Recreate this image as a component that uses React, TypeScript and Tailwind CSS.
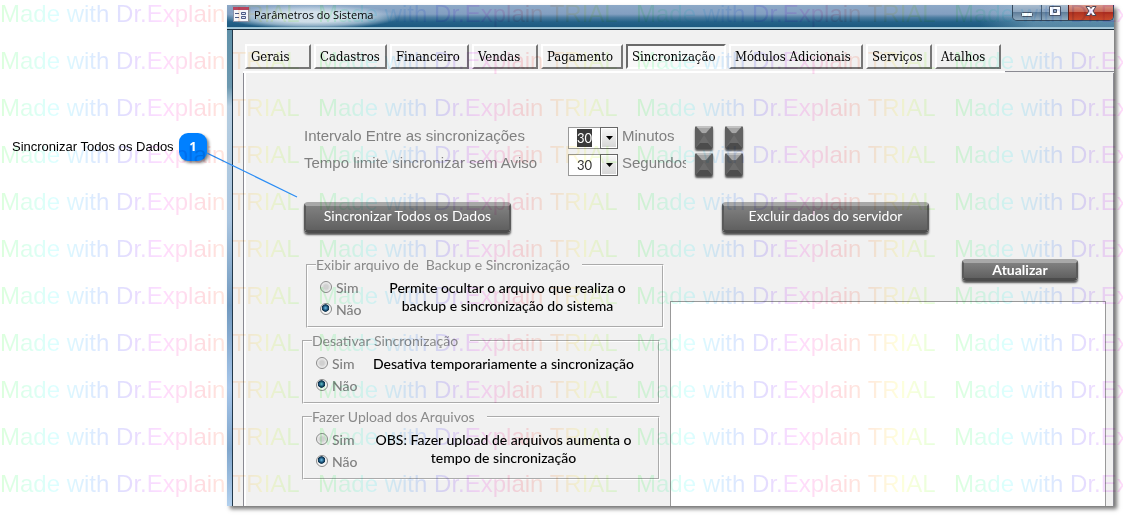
import { ReactNode, useState } from "react";
import { twJoin, twMerge } from "tailwind-merge";

interface ITab {
  label: string;
  width: string;
}

interface IOptionGroup {
  name: string;
  legend: string;
  description: string;
  className?: string;
}

const TABS: ITab[] = [
  { label: "Gerais", width: "w-[66px]" },
  { label: "Cadastros", width: "w-[73px]" },
  { label: "Financeiro", width: "w-[79px]" },
  { label: "Vendas", width: "w-[66px]" },
  { label: "Pagamento", width: "w-[82px]" },
  { label: "Sincronização", width: "w-[100px]" },
  { label: "Módulos Adicionais", width: "w-[134px]" },
  { label: "Serviços", width: "w-[66px]" },
  { label: "Atalhos", width: "w-[66px]" },
];

const GROUPS: IOptionGroup[] = [
  {
    name: "backup",
    legend: "Exibir arquivo de  Backup e Sincronização",
    description: "Permite ocultar o arquivo que realiza o\nbackup e sincronização do sistema",
    className: "ml-1 -mr-1",
  },
  {
    name: "desativar",
    legend: "Desativar Sincronização",
    description: "Desativa temporariamente a sincronização",
  },
  {
    name: "upload",
    legend: "Fazer Upload dos Arquivos",
    description: "OBS: Fazer upload de arquivos aumenta o\ntempo de sincronização",
  },
];

function App() {
  const [activeTab, setActiveTab] = useState<string>("Sincronização");

  return (
    <div className="relative flex min-h-screen overflow-hidden bg-white pt-[5px] pr-[9px] pb-[9px] font-['Liberation_Sans',sans-serif]">
      <Callout />

      <main className="flex min-w-0 flex-1 flex-col shadow-[3px_3px_4px_#777]">
        <TitleBar />
        <div className="flex flex-1 bg-[#f1f1f1]">
          <div className="w-[5px] bg-[linear-gradient(#5f90a8,#6d99b0_12%,#b5cde0_16%,#a9c5e0_40%,#7199bf_58%,#a6c6ea_75%,#80a6cc_88%,#b2d0ee)]" />
          <div className="flex min-w-0 flex-1 flex-col border-l border-[#23394b] pt-[14px] pl-[10px]">
            <TabBar activeTab={activeTab} onSelect={setActiveTab} />
            <SyncPanel />
          </div>
        </div>
      </main>

      <Watermark />
    </div>
  );
}

export default App;

const Callout = () => (
  <aside className="relative w-[227px] shrink-0 pt-[127px] pl-3">
    <div className="flex items-center gap-[6px]">
      <p className="w-[161px] pt-px text-[13px] leading-7 whitespace-nowrap text-black">
        Sincronizar Todos os Dados
      </p>
      <span className="flex h-7 w-7 items-center justify-center rounded-[9px] bg-[#0080ff] font-['Open_Sans',sans-serif] text-[13px] font-bold text-white shadow-[2px_2px_3px_#888]">
        1
      </span>
    </div>
    <svg
      className="pointer-events-none absolute top-[147px] left-[207px] z-10 h-[47px] w-[92px]"
      viewBox="0 0 92 47"
    >
      <path d="M0 1 L90 45" stroke="#2b8df5" strokeWidth="1.2" fill="none" />
    </svg>
  </aside>
);

const TitleBar = () => (
  <header className="flex h-[25px] shrink-0 justify-between border-b border-[#182c3a] bg-[linear-gradient(#8da9c7,#839fc1_38%,#4e7ea2_52%,#256289_70%,#1d5a80_91%,#a9cddd_94%)]">
    <div className="flex items-center gap-[5px] bg-[radial-gradient(ellipse_at_center,#dbe6efee_30%,#c4d6e5aa_52%,transparent_72%)] pr-6 pb-[5px] pl-[6px]">
      <FormIcon />
      <h1 className="font-['Open_Sans',sans-serif] text-[11px] leading-4 whitespace-nowrap text-black">
        Parâmetros do Sistema
      </h1>
    </div>
    <div className="flex bg-[linear-gradient(90deg,transparent,#a9c8d866_40%)] pl-8">
      <div className="flex h-4 overflow-hidden rounded-b-[5px] border border-t-0 border-[#34485c]">
        <ControlButton label="Minimizar" className="w-7">
          <rect x="8.5" y="7.5" width="11" height="4" rx="1" fill="#fff" stroke="#4a5568" />
        </ControlButton>
        <ControlButton label="Maximizar" className="w-[27px] border-l border-[#4b6075]">
          <path d="M8.5 1.500h11v9h-11z M12.500 4.500h3v3h-3z" fill="#fff" fillRule="evenodd" stroke="#4a5568" />
        </ControlButton>
        <ControlButton
          label="Fechar"
          className="w-[45px] border-l border-[#5a1f1c] bg-[linear-gradient(#d79a8f,#c86a58_45%,#b03220_50%,#c84a2c)]"
        >
          <path
            d="M9 1.500h3.500L14 3.500l1.500-2H19L16 6l3 4.500h-3.500L14 8.500l-1.500 2H9L12 6z"
            fill="#fff"
            stroke="#4f4656"
          />
        </ControlButton>
      </div>
    </div>
  </header>
);

const ControlButton = ({
  label,
  className,
  children,
}: {
  label: string;
  className: string;
  children: ReactNode;
}) => (
  <button
    type="button"
    aria-label={label}
    className={twMerge(
      "flex items-start justify-center bg-[linear-gradient(#a9bccf,#8ea6bf_45%,#617f9b_50%,#8faabf)]",
      className
    )}
  >
    <svg className="h-[14px] w-7 shrink-0" viewBox="0 0 28 14">
      {children}
    </svg>
  </button>
);

const FormIcon = () => (
  <svg className="h-[15px] w-4 shrink-0" viewBox="0 0 16 15">
    <rect x="0.500" y="0.500" width="15" height="14" fill="#f4f6fb" stroke="#8c93a8" />
    <rect x="0" y="0" width="16" height="3" fill="#b8445e" />
    <path d="M2 6.500h4M2 10.500h4" stroke="#4c5a86" />
    <path d="M8.500 5.500h4v2h-4zM8.500 9.500h4v2h-4z" fill="#dfe5f4" stroke="#4c5a86" />
  </svg>
);

const TabBar = ({
  activeTab,
  onSelect,
}: {
  activeTab: string;
  onSelect: (label: string) => void;
}) => (
  <nav className="flex gap-[3px] pl-[2px]">
    {TABS.map((tab) => {
      const isActive = tab.label === activeTab;
      return (
        <button
          key={tab.label}
          type="button"
          onClick={() => onSelect(tab.label)}
          className={twJoin(
            "h-[25px] border-2 px-1 text-left whitespace-nowrap text-black",
            "font-['DejaVu_Serif_Condensed','DejaVu_Serif',serif] text-[13px] leading-5",
            tab.width,
            isActive
              ? "border-t-[#6a6a6a] border-r-white border-b-white border-l-[#6a6a6a] bg-[#f9f9f9] pt-px"
              : "border-t-white border-r-[#777] border-b-[#777] border-l-white bg-[#f1f1f1]"
          )}
        >
          {tab.label}
        </button>
      );
    })}
  </nav>
);

const SyncPanel = () => (
  <section className="mt-[2px] flex flex-1 flex-col">
    <div className="flex">
      <div className="h-[2px] w-[762px] bg-white" />
      <div className="h-px flex-1 bg-[#8a8a92]" />
    </div>
    <div className="flex flex-1 flex-col border-x border-[#8a8a92] pt-[53px] pl-[58px] shadow-[inset_2px_0_0_#fff]">
      <div className="flex flex-col gap-1 pl-[2px]">
        <IntervalRow
          id="intervalo"
          label="Intervalo Entre as sincronizações"
          unit="Minutos"
          isSelected
        />
        <IntervalRow
          id="limite"
          label="Tempo limite sincronizar sem Aviso"
          unit="Segundos"
        />
      </div>

      <div className="mt-[26px] flex gap-[211px] pl-[2px]">
        <GlossButton className="h-[31px] w-[207px] pb-1">
          Sincronizar Todos os Dados
        </GlossButton>
        <GlossButton className="h-[31px] w-[207px] pb-1">
          Excluir dados do servidor
        </GlossButton>
      </div>

      <div className="flex flex-1">
        <div className="flex w-[358px] shrink-0 flex-col gap-1 pt-[23px]">
          {GROUPS.map((group) => (
            <OptionGroup key={group.name} {...group} />
          ))}
        </div>
        <div className="ml-[10px] flex min-w-0 flex-1 flex-col pt-[26px] pr-[7px]">
          <GlossButton className="mr-7 h-[22px] w-[116px] self-end pb-[2px] font-bold">
            Atualizar
          </GlossButton>
          <textarea
            aria-label="Arquivos"
            readOnly
            className="mt-5 w-full flex-1 resize-none border border-b-0 border-[#999] bg-white"
          />
        </div>
      </div>
    </div>
  </section>
);

const IntervalRow = ({
  id,
  label,
  unit,
  isSelected = false,
}: {
  id: string;
  label: string;
  unit: string;
  isSelected?: boolean;
}) => (
  <div className="flex h-[23px] items-center text-[15px] leading-5 text-[#808080]">
    <label htmlFor={id} className="w-[264px] pb-1 whitespace-nowrap">
      {label}
    </label>
    <div className="relative h-[22px] w-[50px]">
      <select
        id={id}
        className={twJoin(
          "h-full w-full appearance-none border border-[#999] bg-white pl-2 font-['Lato',sans-serif] text-[13px]",
          isSelected
            ? "bg-[linear-gradient(#3a3a3a,#3a3a3a)] bg-[length:15px_18px] bg-[position:8px_1px] bg-no-repeat text-white"
            : "text-[#333]"
        )}
      >
        <option>30</option>
      </select>
      <span className="pointer-events-none absolute inset-y-0 right-0 flex w-[18px] items-center justify-center border border-[#666] bg-[linear-gradient(#f8f8f8,#d5d5d5)] shadow-[inset_0_0_0_1px_#fff]">
        <svg className="h-1 w-[7px]" viewBox="0 0 7 4">
          <path d="M0 0h7L3.500 4z" fill="#000" />
        </svg>
      </span>
    </div>
    <span className="ml-1 w-16 overflow-hidden pb-1 whitespace-nowrap">{unit}</span>
    <div className="ml-[9px] flex gap-3">
      <KeyButton label={`Aumentar ${unit}`} />
      <KeyButton label={`Diminuir ${unit}`} />
    </div>
  </div>
);

const KeyButton = ({ label }: { label: string }) => (
  <button
    type="button"
    aria-label={label}
    className="h-[23px] w-[18px] overflow-hidden rounded-[2px] shadow-[0_2px_2px_#555]"
  >
    <svg className="h-full w-full" viewBox="0 0 18 23">
      <rect width="18" height="23" fill="#6c6c6c" />
      <path d="M0 0L9 9L0 23z" fill="#5f5f5f" />
      <path d="M18 0L9 9L18 23z" fill="#626262" />
      <path d="M0 23L5 17h8L18 23z" fill="#4c4c4c" />
      <path d="M1 0h16L11 7H7z" fill="#a6a6a6" />
      <path d="M1 0h16L15 2H3z" fill="#c2c2c2" />
    </svg>
  </button>
);

const GlossButton = ({
  className,
  children,
}: {
  className?: string;
  children: ReactNode;
}) => (
  <button
    type="button"
    className={twMerge(
      "flex items-center justify-center rounded-[4px] border-x-2 border-t-4 border-b-[3px] border-x-[#5a5a5a] border-t-[#a8a8a8] border-b-[#4c4c4c]",
      "bg-[linear-gradient(#808080,#606060)] font-['Lato',sans-serif] text-[14px] leading-4 text-white shadow-[0_2px_2px_#555]",
      className
    )}
  >
    {children}
  </button>
);

const OptionGroup = ({ name, legend, description, className }: IOptionGroup) => (
  <fieldset
    className={twJoin(
      "h-[72px] border-2 border-white px-2 font-['Lato',sans-serif] [border-style:groove]",
      className
    )}
  >
    <legend className="pr-3 text-[14px] leading-[18px] whitespace-pre text-[#8a8a8a]">
      {legend}
    </legend>
    <div className="flex pl-1">
      <div className="flex w-[41px] shrink-0 flex-col gap-1 pt-1">
        <RadioOption name={name} label="Sim" />
        <RadioOption name={name} label="Não" defaultChecked />
      </div>
      <p className="flex-1 pt-[5px] text-center text-[14px] leading-[18px] font-medium whitespace-pre text-black">
        {description}
      </p>
    </div>
  </fieldset>
);

const RadioOption = ({
  name,
  label,
  defaultChecked,
}: {
  name: string;
  label: string;
  defaultChecked?: boolean;
}) => (
  <label className="flex h-[18px] items-center gap-1 text-[14px] font-medium text-[#808080]">
    <input
      type="radio"
      name={name}
      defaultChecked={defaultChecked}
      className={twJoin(
        "h-3 w-3 shrink-0 appearance-none rounded-full border border-[#8a8a8a]",
        "bg-[radial-gradient(circle,#d0d0d0_30%,#f4f4f4_75%)]",
        "checked:bg-[radial-gradient(circle_at_45%_40%,#6fc0e8,#14486e_32%,#0d3048_42%,#f4f4f4_50%)]"
      )}
    />
    {label}
  </label>
);

const Watermark = () => (
  <div
    aria-hidden="true"
    className="pointer-events-none absolute inset-0 z-20 overflow-hidden mix-blend-multiply"
  >
    <div className="-mt-[10px] text-[24px] leading-[47px]">
      {Array.from({ length: 11 }, (_, row) => (
        <div key={row} className="flex h-[47px] whitespace-nowrap">
          {Array.from({ length: 4 }, (_, col) => (
            <div key={col} className="w-[318px] shrink-0">
              <span className="bg-[linear-gradient(90deg,#dcffdc,#dcffff_18%,#dce4ff_36%,#e6dcff_44%,#ffdcff_54%,#ffdce0_68%,#ffeadc_78%,#ffffdc_88%,#e6ffdc)] bg-clip-text text-transparent">
                Made with Dr.Explain TRIAL
              </span>
            </div>
          ))}
        </div>
      ))}
    </div>
  </div>
);
